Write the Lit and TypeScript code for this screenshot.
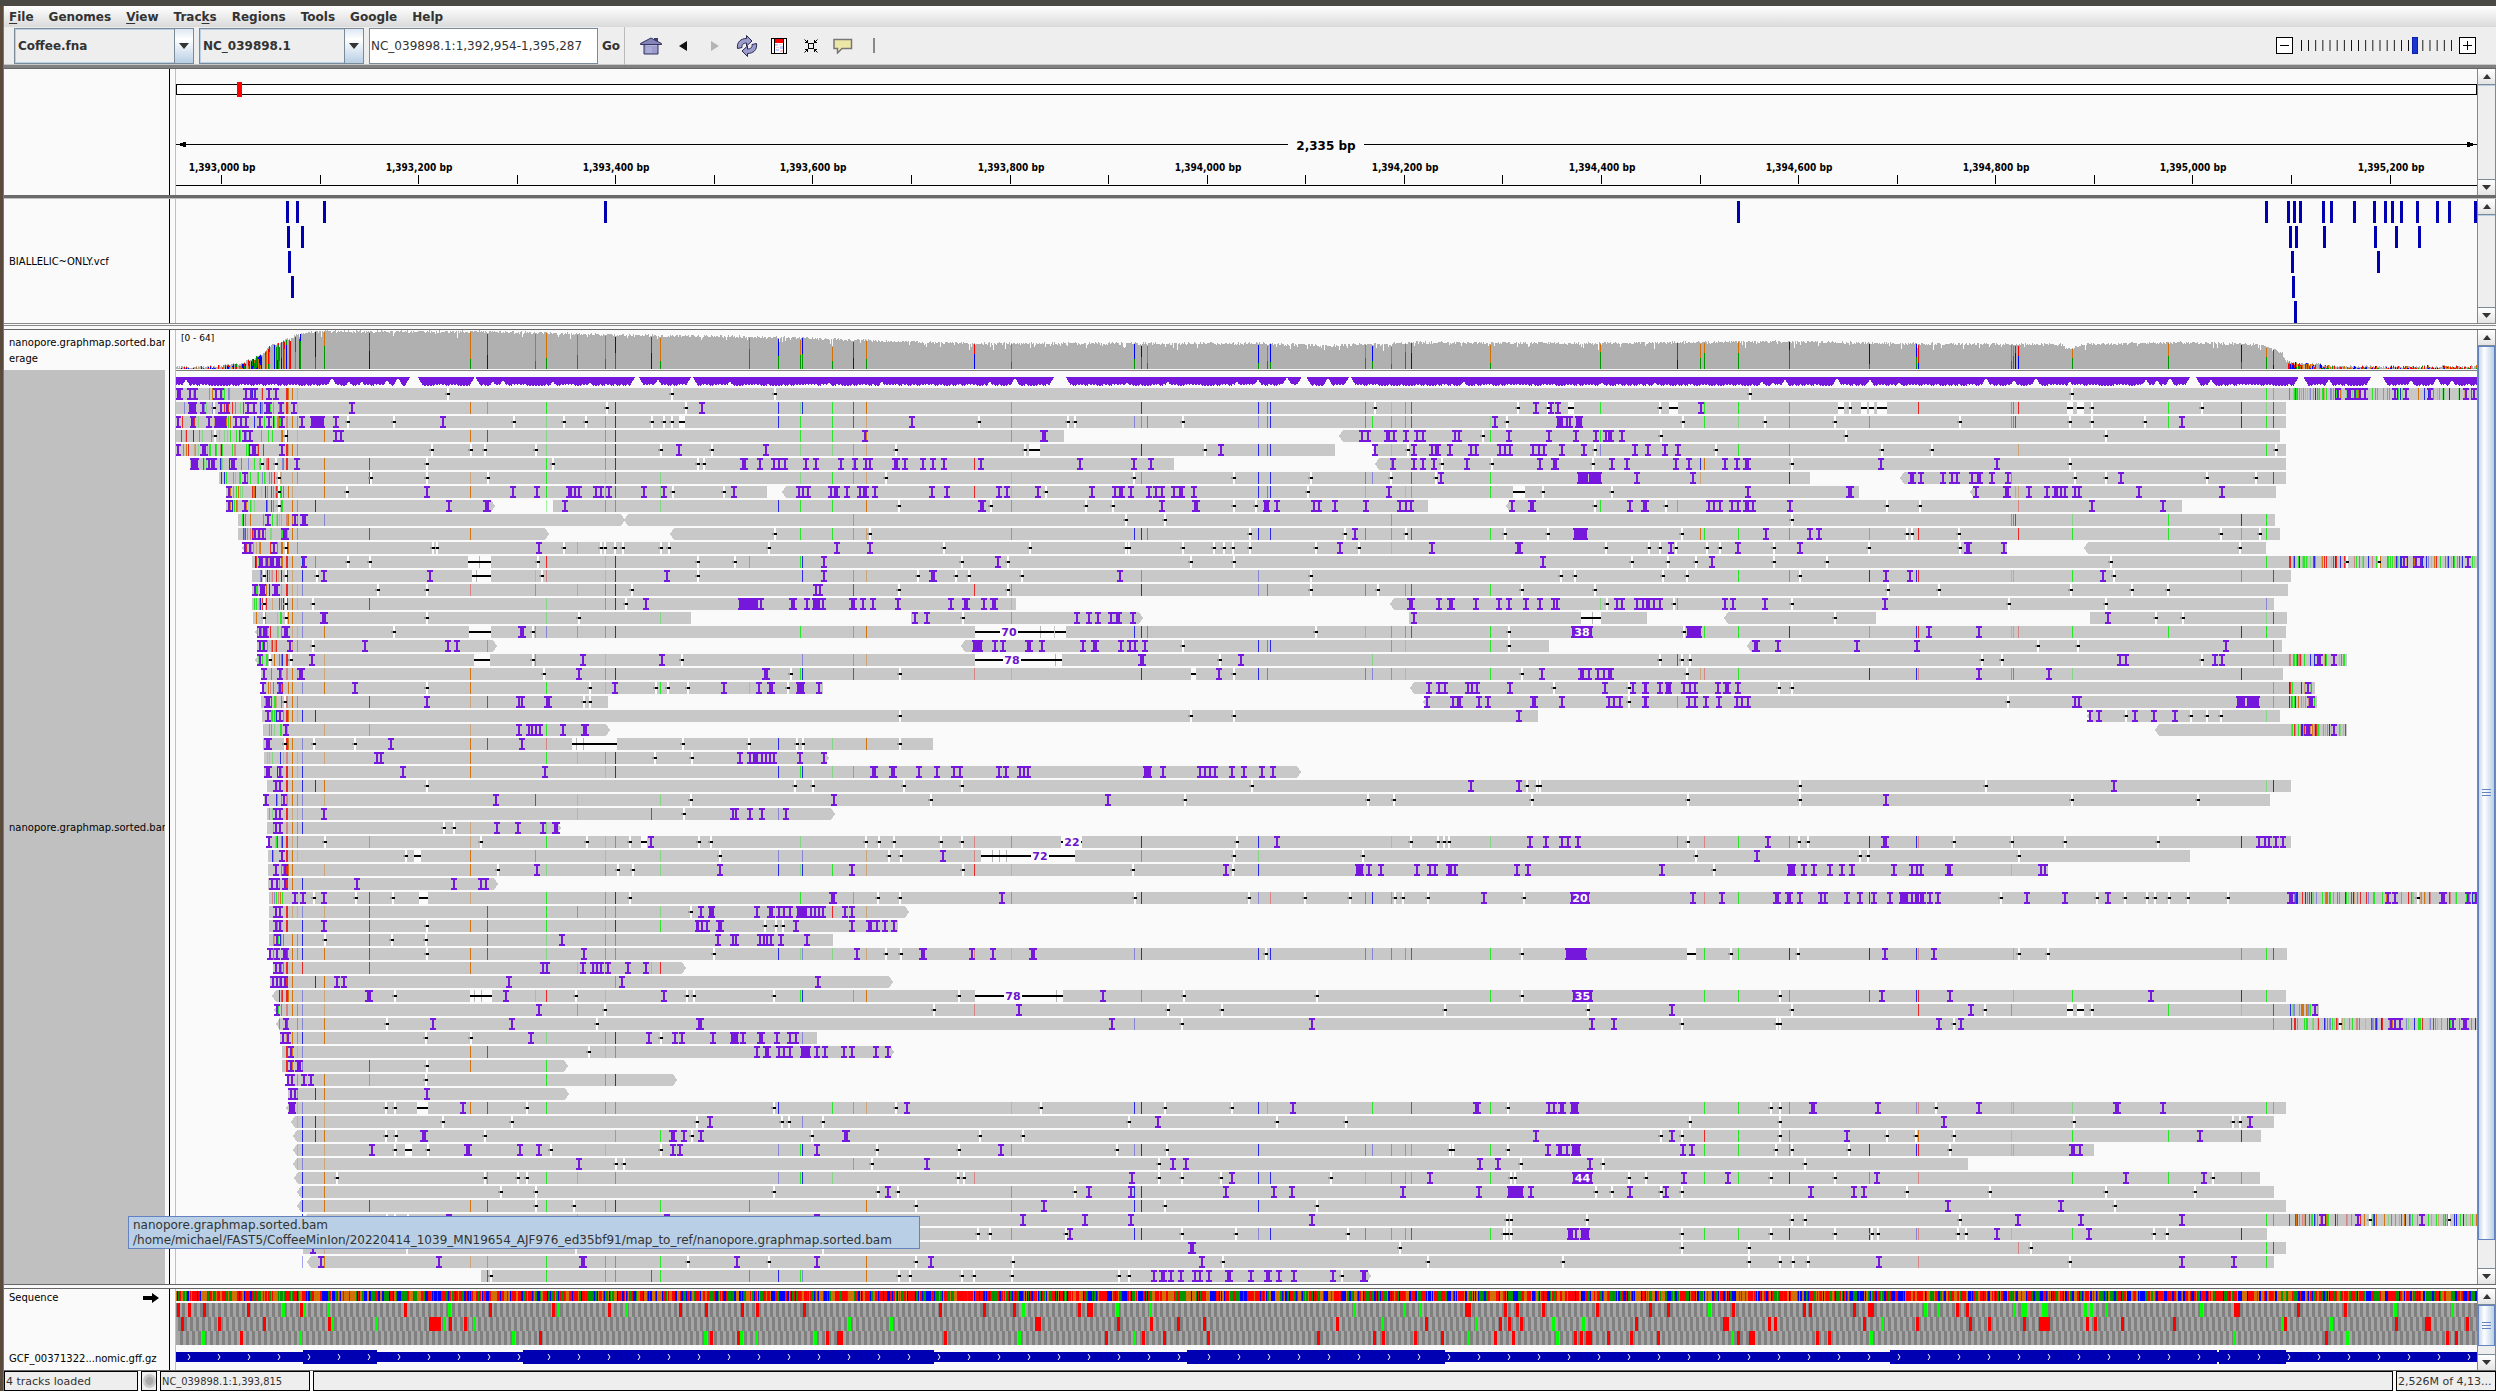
import { LitElement, html, svg, css } from "lit";
import { customElement, property } from "lit/decorators.js";

/* ---------- geometry of the data area ---------- */
const LEFT = 176;
const RIGHT = 2477;
const READ_TOP = 388;
const PITCH = 14;
const READ_H = 12;

const BASE: Record<string, string> = { "1": "#22e622", "2": "#2222e6", "3": "#d17105", "4": "#ec2020", "5": "#555555" };

/* Deterministic noise, so that the view is the same on every paint. */
const noise = (a: number, b = 0) => {
  let n = (a * 374761393 + b * 668265263) | 0;
  n = Math.imul(n ^ (n >>> 13), 1274126177);
  return ((n ^ (n >>> 16)) >>> 0) / 4294967296;
};

const box = (x: number, y: number, w: number, h: number) => `M${x} ${y}h${w}v${h}h${-w}z`;

/* Aligned reads per row; "<" and ">" mark the strand arrow. */
const SPANS = `176-2477|176-2286|176-2286|176-1064 <1339-2280|176-1335 <1373-2286|190-1174 <1375-2286|219-1810 <1900-2286|226-767 <782-1859 <1970-2276|226-495> 553-1428 <1506-2182|238-625> <624-2275|238-549> <670-2280|<242-2007 <2084-2266|252-2477|252-2291|252-2288|252-1016 <1390-2274|253-691 911-1143> 1409-1647 <1724-1876 2090-2287|<255-2286|257-497> <961-1549 <1747-2282|<255-2347|261-2283|262-823 <1410-2315|261-608 <1423-2317|262-1538 <2087-2280|263-610> <2155-2347|263-933|264-829>|264-1301>|267-2291|264-2270|267-835>|267-561>|268-2291|268-2190|268-2048|268-498>|269-2477|269-909>|269-898|269-833|269-2287|273-686>|270-893>|<272-2286|<274-2319|<276-2477|280-817|282-894>|282-568>|287-677>|288-569>|<286-2286|<291-2274|<293-2261|<293-2094|<293-1968|<294-2260|<297-2274|<297-2286|<303-2477|<303-2267|303-2286|<307-2274|481-1371>`.split("|");

/* Shared variant columns, addressed by letter. */
const COLS = "abcdefghijklmnopqrstuvwxyzABCDEFGHIJKLMNOPQRSTUVWXYZ";
const COL_X = [302, 315, 324, 369, 470, 487, 535, 546, 577, 605, 615, 651, 660, 749, 778, 800, 802, 832, 853, 866, 974, 1011, 1134, 1141, 1147, 1258, 1267, 1270, 1365, 1372, 1391, 1405, 1411, 1490, 1600, 1677, 1700, 1704, 1738, 1789, 1869, 1916, 1918, 2011, 2013, 2015, 2018, 2072, 2168, 2241, 2266, 2273];
const COL_BASE = "2234341131241321214341223232321141143112224134411214";

const VARIANTS = `Y Z4'|e f5' h k o p' q p' r s t v x z A B C E' F G I L M N' Q R S U W X Y' Z|h' j k o p r s t' v w' x' y z' A B C D1 E F G H' L M' N' O' R S T W X Y Z5|c e f5 h' j k p r t v H1 I|h' j k p' r' s' t' x z A B E' I2' M N' U3' Y|c d h j k s' u E K2 L3|c d e' h j' k m' p' r s' t' v' x' z B C3 D' G H K' N R Z5|c e h j k4 m' u v' z A B C' F' G' H T3' U3'|b h' j k' m' o p r t v G I J4' U4'|c2' s4' E R S T V' W X Y|d e p r s' t' v w x y z B C E1 G H K L M N' O4' Q V W X4' Y U|i' E'|a b' d4' h4 j' k n4' p q Y|a g' h4' j' k q s' t' x' z' M N' O P Q R' S' V X' Z5|a' e4' g i' j k s u v x z' A C F G H|d h' j k v' J' Y2' I'|a' h' m' v Y1' Z5|a' c g h2' i4' j k p s' t w x y C' E F G H L M N O4' P Q R' S' U4' V W X Y|f5' z A B E1 F' H Z5|c' g j' q' s' t' D1' J4 Z5'|a c' e j k p q s u' v' x z A C D' E F' H K' L4' M O P Q' R S V' X|a' c e h j' k m n1' Z5'|d e' f J1 Z5'|a b Y'|c' d' e' h|a' e f h4' o r' t|a' c' e h i1' j k|a e j' k o p q r' s'|a b c Y' Z2|a' c' g4 i1' m'|a' i1' l4 n o'|a e' h'|c' d' e' h j' k' p' u' v x z E' G' H' J1 L4' M N' O P Q' S' X|e g1 j' m' o' q' t' u' x' z1'|c' e h' j m' o p' q r t' u v' z R'|a|a' d e' h j k p s' v x z' B4' C D E4' L4' M O P|a' c' d f h i1 j k' m' r4 t'|a c' d e f h j' k m|a c' d f h' j k'|a c d e f h' j k' o p' q' r' t' u' v' w' x z B C D2' E3 F G H L M N O P Q' S' X' Y Z|a4 d e i1' j' m4 l1'|b c k1|a' c' g' h4 j' p q s' t H x' L M N' O4 P Q S' V X Y|a' c' i4' u' Q R W X1' Z|a' c w' Z2'|a c h' j k q'|a' e f j' k'|a' d e h|c d' h j k|b c|a' c' e f h j k' o r s' t' v' x w z A' D1 G H L M N' P' Q' R' S' V' Y Z'|a b c' q2'|a b c k4' m L4 M N' Q3 R' V W X|a c' j' o' p q v w' x z C D' E F G' H L M N' O P Q S' R'|a' c' s4'|a c f' h i' k' o' p q r' u' z B C3' E F G' H L M N O' Q' V W X'|a c v w x2|a c d5 e f h j k v w x z m n t|a i' Y Z2'|h k v w x z' B C E F G H L M N O P' Q' R' V X|c' U' Y Z|a' c e' f' h j k' m t Q4' Y|f4 h j k' n l4 m o p q' t`.split("|");

/*
 * Insertions and deletions, kept in tiles. A tile starts at x0 and has its
 * own unit; each line reads "row: insertions; deletions". "*" is a wide
 * insertion, "a-b" a run, and "=n" prints its length.
 */
interface Tile { x0: number; unit: number; rows: string }
const TILES: Tile[] = [
  { x0: 0, unit: 800 / 1568, rows: `0:350* 372 383 423 433 482 492 500 527 541;879 1318 1519
1:370-385 397 434 445 487 497 525* 551 576 690 1376;419 1189 1345
2:348 379 410 422-443 462 472 482 510 527 553 592 609-635 659 868;683 773 1007 1105 1149 1278 1301 1318 1330-1342
3:480 490 659 669;421 560
4:348 400* 497* 553 1331 1501;846 924 950 1051 1295 1395
5:375-389 409 418* 457* 582 1458* 1489 1517 1527 1538;513 540 837 1083 1369 1379
6:481;546 727 837 957
7:449 837 1006 1052 1118* 1127 1135 1168 1177 1193 1262 1301 1439 1567;546 681 1319 1419
8:449 481 880 954* 1107;546
9:525 578 596*;
10:500 508 516 558*;1519
11:480 490 537 1056;560 848 856 1105 1177 1185 1206 1222 1295 1312 1508
12:508-515 523 533* 545* 596;682 725 918-962 1054 1369 1440
13:635 843 1307;518 560 621 925-962 1063 1369
14:500 510-520 541*;741 837 1238
15:1266 1448-1486 1491 1555*;518 560 614 1226
16:636*;518 560 837 1135
17:510 520* 560* 1023*;773 920-962 1044
18:509 517 568 715 878 896;614
19:509 611 1143 1297;530 571 930-960 1044 1337
20:517 549 589* 1135 1501*;1067 1551` },
  { x0: 800, unit: 850 / 1568, rows: `1:1357 1385 1398;1061 1325 1380 1416-1427
2:206 1282 1396-1408 1414 1421 1431-1442;331 495 507 706 1305
3:119 450* 1037 1047 1085* 1096 1118 1139 1149 1208 1216 1307 1382 1431 1469 1487 1495* 1516;1260
4:776 1061 1132 1166 1175* 1199 1238 1247 1291 1300 1309 1353 1363 1373 1405 1446 1541 1564;177 415 423-442 747 1121 1466
5:11 30 76 102 121 130 178* 194 227 245 265 333 516 616 647 1093 1132 1149 1170 1231 1366 1392* 1498 1526;1185 1276 1463
6:1182 1436-1453 1456-1478 1544;158 616 800 942 1091 1173
7:5 15 57 67* 87 110 120* 138 243 271 367 381 439 538 582 592* 610 644 657 667 690 702* 727 1087;454 937 1315-1337 1370 1498
8:336* 668 731* 856-866 880 948 958 986 1045 1106 1117 1128 1313 1350* 1531 1557;183 352 527 577 800 841 1467
9:;602 673
10:1023 1427-1451;129 831 1005 1118 1301 1380
11:68 130 997 1165 1327*;265 424 602 607 706 764 782 799 831 951 1031 1487 1566
12:44 365 1370;299 384 722 800 1535
13:44 246* 590;218 287 311 410 942 1403 1429
14:29 37;183 384 942 1067 1332 1467
15:12 24-36 42 97* 116 134 180 278 306* 340 357* 1128* 1179 1201* 1247 1289 1307 1340 1366 1390 1397 1507 1516 1544 1555 1563;1488
16:212 234 511 533 549 574 587* 614 1132;300 1440-1478
17:1425-1461=38;322-468=70 471-491 951 1307
18:320-336 359 374 422* 446 522 544* 592 609 618 636;706 1308
19:631* 813;322-484=78 775
20:773 1368 1442* 1455 1472 1483 1495*;184 722-730 800 1332
21:1160 1179 1189 1232 1240 1248 1310 1485 1537 1558;1391 1530
22:1156 1205 1216* 1252 1269 1354* 1406 1493 1502 1512 1558;1530
23:1326;722 800
27:635-648 670 737 747 757 766 796 819 852 872;` },
  { x0: 1646, unit: 850 / 1568, rows: `0:1276 1297* 1308 1318 1327 1382 1402 1446 1513 1528;191 785
1:101;26 43-59 355-366 377 397-408 412-420 426-444 777-788 795-808 823 1026
2:988;69 219 348 580 782 822 920
3:;27 369 848
4:4 35 59;130 435 528 1163
5:55 79 145 168 187* 433 647;270 782
6:86 491* 507 547 564 574 601 614* 638 668 876;791 848 1035 1125
7:188 376* 608 666* 706 740 757* 765 773 792 799 909 1062;
8:0 116 126 137 158 169 187* 198 265 822 953;37 444 505
9:;270
10:221 302 320;66 481 490 578 1060 1132
11:46 169 285 594* 660;5 26 56 113 136 236 412 580 1096
12:121 1399 1420 1429 1517;41 92 236 334 857 1293 1352
13:442 487 843;31 75 284 863
14:;446 540 784 896 963
15:5 15 25 145 160 219 440;52 270 669 848
16:852;348 940 990
17:75-101 522 614;70
18:202* 243 389 500 1070;724 797
19:874 885 1049 1062 1242* 1270;26 67 81 620 656 1026
20:614 743;75
21:0 26 36-46 71 81 91 132 150* 169 1222;246 270
22:0 79 90 110 135 167 177 188 791 798 1090-1105 1109-1131 1226*;667
23:819 836 902 938 976;885 1005 1035 1060
24:1222* 1270;` },
  { x0: 250, unit: 780 / 1568, rows: `21:26 60 211 734 953 1023 1048* 1100-1113 1144;356 683 816 840 880 1081
22:36* 356 540 547 600*;71 671 683
23:37 60;1306
24:72 540 560 567 575 582 629 673*;
25:36* 283 547;71 129 211 647-738 870 1003 1100 1111 1306
26:255 263 985 1005 1012-1022 1030 1037 1045 1053 1106 1154;814 888
27:36* 60 308 593 1255* 1293* 1345 1381 1415 1428 1506 1520 1547 1555 1564;
28:53 60;355 1095 1132 1315 1432
29:32 69 494 1174;887 1369
30:53 60 149 970 977 1005 1029 1077;872
31:53 60 497 539 589 616*;390 410
32:39 806;150 465 677 764 787-799 902 926 1238 1265 1294 1390 1432
33:64 1393;314 330-344 944 1285 1308
34:53 71 577 945 1210;499 740 770 1433
35:44 54 70 215 410 464 474;
36:91 107 149 1171* 1512;129 214 287 340-358 763 1263 1306
37:53 60 907 923-933 1019 1048* 1064 1074 1085 1100-1120 1127 1136 1143 1152 1196 1210;887
38:53 60 149 897-902 909 919 945* 1098 1210 1247* 1260 1276 1294;355 1036 1057 1072
39:54 627 941 970 977 1025 1033 1040 1048 1067 1120;150 285 353
40:40 54 70* 671 1220 1353* 1451 1494;355 932 1278 1308
41:53 60 589 597 669 690 698 706 719 760 796;
42:46 55 63 71 175 189 521 748 1142;
43:240* 515 832;291 442-486 656 878 893 1054 1425
44:54 581 1546;713 1375
45:73 368 527 904*;275 698
46:67 76 565 802 854 869 931 967-980 992 1027* 1060 1086 1097;353 445 827
47:83 1019 1040* 1063 1074 1085 1108-1126 1140 1156 1194 1210 1258 1283;681
48:83 99*;356
49:77 84 109 123;353
50:82 91 356;
51:78-90 428 1321;274 291 336-358 557 1054 1298
52:925;388 527 898 1070 1084 1152
53:349* 850* 872 907 1199*;274 293 472 888 1130 1468 1554
54:245 438* 543 581 850 864 1140 1510;291 312-326 358 606 826 1261 1425
55:661 1361;736 751 1251
56:;174 472 539 557 1424 1436` },
  { x0: 960, unit: 800 / 1568, rows: `28:1002 1096;573 1112 1130 1137
29:290;441 799 851 1122 1427
32:621 1117 1148 1180 1192 1212;198-240=22 543 884 936 948 959 1427
33:1563;41-225=72 537 790 1443
34:521 777-790 802 825 896 922 931 960* 971 1091 1113 1376;339 536 1477
36:1027 1197-1233=20 1437 1493;343 566 676 764 852 868 917 1106
40:144* 1188-1226;599 1102 1425-1443 1512
43:280 1202-1239=35;29-202=78 440 699 1102
44:1395;408 513 950 1230
45:298 690 1239 1282;436 1416
51:653 1014* 1155 1165 1180* 1198-1212;158 402 534 1074
52:388;331 622 757 1431
53:1129 1395;1373 1416
54:1152 1176* 1190 1200-1216 1417 1435;307 405 961 967 1074
55:417 443 1019 1054 1235;391 1100 1260
56:337 533 921 1202-1239=44 1419 1505;391 436 512 727 1079 1087 1311 1345
57:253 335 521 615 651 868 1017 1075-1103 1119 1313 1384;225 1247 1278 1373 1416
58:165;402 699
59:123 245 335 690;1073 1080 1229
60:215 1192-1202 1208 1217-1232;35 59 207 436 540 760 1067 1073 1080 1416
61:455*;862 1416 1547
62:474;103 516 917 1182 1547
63:380 398* 413 433 461 471 488 528* 570 604* 625 655 731 791*;3 28 102 312 332 748` },
  { x0: 1700, unit: 796 / 1568, rows: `28:815;197 563
29:366;197 733 980
32:134 365* 1102 1112 1121 1135 1149;195 213 501 615 719 902
33:;316 331 628
34:174-188 205 225 256 280 299 382 418 427 435 490* 671 680;
36:151* 176* 197 238 246 290 315 343 374 394-410 418 427* 437* 453 469 644 719 804 1165* 1356 1369 1463* 1513 1528;593 782 837 880 897 924 961 1041 1415
40:364 461;194 628 685
43:358 492 888;157
44:534 1212;182 562 723-735 743-756 772
45:471 514 1361 1370 1379 1484 1506*;152 157 500 1261
51:222* 351 549 821* 912;140 157 464
52:481 1083;157 737 1050 1063
53:290 985;158 368 426 500
54:735* 748;150 181 293 492
55:;207
56:349 839 993;139 266 1010
57:219 303 323;407 571 799 976
58:488 711;817
59:626 750 949 1225 1296 1422;182 207 513 1320 1476
60:585 766;139 266 338 351 508 523 895 920
61:;652
62:353 949 1052;157 183 212 729` },
  { x0: 0, unit: 960 / 1568, rows: `57:1450;818 875 1264 1434 1467
58:;876 937 1496
59:733 1090 1334;632 645 666
61:511;665 941 1344
62:524 717 952* 1203 1334 1520;1123 1256 1496
63:;802 1469 1487` },
];

const VCF = [
  [287, 297, 324, 605, 1738, 2266, 2288, 2294, 2300, 2323, 2331, 2354, 2374, 2385, 2392, 2401, 2417, 2437, 2449, 2475],
  [288, 302, 2290, 2296, 2324, 2375, 2396, 2419],
  [289, 2292, 2378],
  [292, 2293],
  [2295],
];

/* Coverage profile: x, top edge. */
const PROFILE: [number, number][] = [[176, 367], [218, 366], [240, 362], [254, 358], [264, 352], [269, 346], [274, 344], [284, 340], [296, 335], [306, 332], [320, 331], [480, 331], [560, 333], [640, 335], [800, 337], [860, 340], [970, 343], [1260, 343], [1330, 345], [1420, 342], [1600, 343], [1770, 341], [1900, 343], [2060, 344], [2070, 349], [2082, 344], [2180, 342], [2262, 344], [2272, 348], [2282, 353], [2286, 361], [2300, 363], [2320, 364], [2340, 366], [2477, 366]];
const coverTop = (x: number) => {
  let i = 1;
  while (i < PROFILE.length - 1 && PROFILE[i][0] < x) i++;
  const [x1, y1] = PROFILE[i - 1], [x2, y2] = PROFILE[i];
  const t = y1 + ((x - x1) / (x2 - x1)) * (y2 - y1);
  const dip = noise(x, 5) > 0.93 && x < 2280 ? noise(x, 6) * 6 : 0;
  return Math.min(368, Math.round(t + noise(x, 1) * 2.6 - 0.8 + dip));
};

/* Notches in the insertion band: position, height, flat top. */
const NOTCHES: [number, number, number][] = [[186, 7, 0], [332, 8, 0], [349, 5, 0], [362, 5, 0], [387, 6, 0], [398, 8, 0], [414, 9, 8], [475, 9, 1], [493, 5, 0], [503, 6, 0], [553, 5, 0], [590, 4, 0], [637, 9, 4], [658, 7, 0], [692, 9, 2], [730, 5, 0], [829, 4, 0], [882, 5, 0], [990, 5, 0], [1015, 8, 0], [1060, 9, 12], [1127, 4, 0], [1168, 5, 0], [1237, 5, 0], [1258, 7, 0], [1287, 8, 1], [1304, 9, 5], [1328, 8, 0], [1350, 9, 2], [1464, 5, 0], [1602, 4, 0], [1655, 4, 0], [1762, 5, 0], [1773, 4, 0], [1785, 7, 0], [1837, 8, 0], [1870, 7, 0], [1899, 4, 0], [1986, 8, 0], [2014, 6, 0], [2036, 8, 0], [2070, 5, 0], [2146, 7, 0], [2157, 6, 0], [2170, 8, 0], [2193, 9, 6], [2211, 7, 0], [2301, 9, 5], [2329, 7, 0], [2377, 9, 12], [2411, 6, 0], [2437, 8, 0], [2452, 6, 0]];

/* Where a deletion's length is printed along its line. */
const LABEL_AT: Record<string, number> = { "70": 0.43, "78": 0.43, "72": 0.63, "22": 0.5 };

function readsLayer() {
  const ink: Record<string, string> = {};
  const faint: Record<string, string> = {};
  let body = "", gaps = "", dash = "", tail = "", ins = "", fine = "";
  const labels: { x: number; y: number; text: string; light: boolean }[] = [];

  SPANS.forEach((line, r) => {
    const y = READ_TOP + r * PITCH;
    line.split(" ").forEach((s) => {
      const m = /^(<?)(\d+)-(\d+)(>?)$/.exec(s)!;
      const a = +m[2], b = +m[3];
      const l = m[1] ? a + 4 : a, e = m[4] ? b - 4 : b;
      body += `M${l} ${y}H${e}${m[4] ? `L${b} ${y + 6}L${e} ${y + 12}` : `V${y + 12}`}H${l}${m[1] ? `L${a} ${y + 6}` : ""}z`;
      /* soft-clipped, mismatch-rich ends */
      const dense = (from: number, to: number, rate: number) => {
        for (let x = from; x < to; x++) {
          if (noise(x, r + 40) > rate) continue;
          const k = "12341"[Math.floor(noise(x + 9, r * 3 + 7) * 5)];
          const set = noise(x, r + 91) > 0.35 ? ink : faint;
          set[k] = (set[k] || "") + box(x, y, 1, READ_H);
        }
      };
      if (b > 2300) {
        dense(2289, Math.min(b, 2330), 0.5);
        dense(2330, b, 0.32);
      }
      if (a < 300) {
        dense(a + 2, 284, r < 6 ? 0.2 : r < 20 ? 0.3 : 0.22);
        const fixed: [number, number, string, number][] = [[281, 1, "3", 0.5], [286, 2, "4", 0.75], [288, 1, "3", 0.3], [292, 1, "3", 0.7], [297, 1, "1", 0.7]];
        fixed.forEach(([x, w, k, p]) => {
          if (x > a + 3 && noise(x, r) < p) {
            const set = noise(x, r + 3) > 0.3 ? ink : faint;
            set[k] = (set[k] || "") + box(x, y, w, READ_H);
          }
        });
      }
    });
    VARIANTS[r].split(" ").forEach((t) => {
      const m = /^([a-zA-Z])([1-5]?)('?)$/.exec(t);
      if (!m) return;
      const i = COLS.indexOf(m[1]);
      const k = m[2] || COL_BASE[i];
      const set = m[3] ? faint : ink;
      set[k] = (set[k] || "") + box(COL_X[i], y, 1, READ_H);
    });
  });

  TILES.forEach((tile) => {
    const at = (v: string) => Math.round(tile.x0 + +v * tile.unit);
    tile.rows.split("\n").forEach((line) => {
      const [row, rest] = line.split(":");
      const y = READ_TOP + +row * PITCH;
      const [is, ds] = rest.split(";");
      is.split(" ").filter(Boolean).forEach((t) => {
        const [range, label] = t.split("=");
        if (range.includes("-")) {
          const [a, b] = range.split("-").map(at);
          ins += box(a, y, b - a, READ_H) + box(a - 1, y, b - a + 2, 2) + box(a - 1, y + 10, b - a + 2, 2);
          if (label) labels.push({ x: (a + b) / 2, y: y + 11, text: label, light: true });
        } else {
          const wide = range.endsWith("*");
          const x = at(range.replace("*", ""));
          const h = wide ? 4 : 3, s = wide ? 4 : 2;
          ins += box(x - h, y, h * 2, 2) + box(x - h, y + 10, h * 2, 2) + box(x - s / 2, y + 2, s, 8);
        }
      });
      ds.split(" ").filter(Boolean).forEach((t) => {
        const [range, label] = t.split("=");
        if (range.includes("-")) {
          const [a, b] = range.split("-").map(at);
          gaps += box(a, y, b - a, READ_H);
          dash += box(a, y + 5, b - a, 2);
          if (b - a > 40 || (b - a > 18 && !label)) {
            const from = label === "72" ? a : label ? b - 18 : a;
            const to = label === "72" ? a + 26 : b - 4;
            for (let x = from + 4; x < to; x += 7) if (noise(x, +row) > 0.5) fine += box(x, y, 1, READ_H);
          }
          if (label) labels.push({ x: Math.round(a + (b - a) * LABEL_AT[label]), y: y + 11, text: label, light: false });
        } else {
          const x = at(range);
          gaps += box(x - 1, y, 2, READ_H);
          dash += box(x - 1, y + 5, 3, 2);
          tail += box(x - 3, y + 5, 2, 2);
        }
      });
    });
  });

  return svg`
    <path fill="#c8c8c8" d=${body}></path>
    ${Object.keys(faint).map((k) => svg`<path fill=${BASE[k]} opacity="0.4" d=${faint[k]}></path>`)}
    ${Object.keys(ink).map((k) => svg`<path fill=${BASE[k]} opacity="0.95" d=${ink[k]}></path>`)}
    <path fill="#fafafa" d=${gaps}></path>
    <path fill="#999999" d=${tail}></path>
    <path fill="#b4b4b4" d=${fine}></path>
    <path fill="#000000" d=${dash}></path>
    <path fill="#7518dc" d=${ins}></path>
    ${labels.map((l) => svg`
      ${l.light ? "" : svg`<rect x=${l.x - 9} y=${l.y - 11} width="18" height="12" fill="#fafafa"></rect>`}
      <text class="count" x=${l.x} y=${l.y - 1} fill=${l.light ? "#ffffff" : "#6a14cc"}>${l.text}</text>`)}
  `;
}

function coverageLayer() {
  const base = 369;
  let grey = "";
  const ink: Record<string, string> = {};
  const put = (k: string, x: number, y: number, h: number, w = 1) => (ink[k] = (ink[k] || "") + box(x, y, w, h));
  for (let x = LEFT; x < RIGHT; x++) {
    const t = coverTop(x);
    grey += box(x, t, 1, base - t);
    const inLeft = x < 304, inRight = x > 2287;
    if ((inLeft && noise(x, 77) < (x > 250 && x < 262 ? 0.9 : 0.5)) || (inRight && noise(x, 77) < 0.75)) {
      const h = base - t - Math.round(noise(x, 12) * 2);
      if (h < 1) continue;
      const split = Math.round(h * noise(x, 13));
      put("41342"[Math.floor(noise(x, 14) * 5)], x, base - h, split);
      put("1234"[Math.floor(noise(x, 15) * 4)], x, base - h + split, h - split);
    }
  }
  COL_X.forEach((x, i) => {
    if (x < 305 || x > 2274) return;
    const t = coverTop(x) + 1;
    const h = base - t;
    const cut = Math.round(h * (0.3 + noise(x, 21) * 0.5));
    const top = COL_BASE[i] === "2" ? "2" : COL_BASE[i] === "4" ? "4" : "3";
    put(top, x, t, cut);
    put(top === "4" ? "2" : "1", x, t + cut, h - cut);
  });
  const deep: Record<string, string> = { "1": "#009600", "2": "#0000ff", "3": "#d17105", "4": "#ff0000" };
  const band = `M${LEFT} 377H${RIGHT}V386H${LEFT}z`;
  let cuts = "";
  NOTCHES.forEach(([x, h, w]) => {
    const half = Math.max(3, Math.round(h * 0.6));
    cuts += `M${x - w / 2} ${386 - h}H${x + w / 2}L${x + w / 2 + half} 386H${x - w / 2 - half}z`;
  });
  for (let x = LEFT; x < RIGHT; x += 3) {
    const h = 1 + Math.floor(noise(x, 33) * 2.4);
    cuts += `M${x} 386L${x + 1} ${386 - h}L${x + 3} 386z`;
  }
  return svg`
    <path fill="#b0b0b0" d=${grey}></path>
    ${Object.keys(ink).map((k) => svg`<path fill=${deep[k]} d=${ink[k]}></path>`)}
    <rect x=${LEFT} y="370" width=${RIGHT - LEFT} height="1" fill="#808080"></rect>
    <path fill="#7518dc" d=${band}></path>
    <path fill="#fafafa" d=${cuts}></path>
    <text class="small" x="181" y="341">[0 - 64]</text>
  `;
}

/* Codon marks per frame: stops, then starts; "w" is a double codon. */
const CODONS: { x0: number; unit: number; frames: [string, string][] }[] = [
  { x0: 0, unit: 960 / 1568, frames: [
    ["290 309 333 405 492 662 801 904 995 1111 1153 1212 1237 1313 1536", "463 497 536 733 912 1023"],
    ["297 358 431 538 706w 716w 735 760", "543 614 726 775 1387 1456"],
    ["394 882 1162 1206 1351 1372w 1544", "332 490 838 1152 1211 1235 1331"]] },
  { x0: 950, unit: 960 / 1568, frames: [
    ["56 105 211 228w 846w 907 926 969 1057 1144 1173 1279 1395 1405 1477 1504w", "119 273 327 660 742 767 1240"],
    ["144w 275 329 373 415 632 778 899 913 933 1121 1268w 1338 1348 1493", "706 859 985 1034 1522"],
    ["254 316 350 422 601 693 708 760 804 890 920 1021 1031 1044w 1074 1113 1157 1287 1310w 1416 1436", "113 301 846 992 1278 1505"]] },
  { x0: 1900, unit: 596 / 1568, frames: [
    ["151 175 886w 1047 1172", "67 99 301 327w 381w 487 503 541 791 1303 1451"],
    ["46 185 233 326 374w 386w 491 512 583 722 1012 1305 1389w 1493", "1004 1135"],
    ["1122 1440 1464", "879 1177"]] },
];

function sequenceLayer() {
  const ink = ["", "", "", ""];
  let prev = 0;
  for (let x = LEFT; x < RIGHT; x++) {
    if (noise(x, 51) > 0.28) prev = Math.floor(noise(x, 52) * 4.6) % 4;
    ink[prev] += box(x, 1291, 1, 10);
  }
  let dark = "", red = "", green = "";
  for (let f = 0; f < 3; f++)
    for (let x = LEFT + f * 2; x < RIGHT; x += 6) dark += box(x, 1303 + f * 14, 3, 14);
  CODONS.forEach((t) => t.frames.forEach(([stops, starts], f) => {
    const draw = (s: string) => s.split(" ").map((v) => {
      const w = v.endsWith("w") ? 6 : 3;
      return box(Math.round(t.x0 + parseInt(v) * t.unit) - (w >> 1), 1303 + f * 14, w, 14);
    }).join("");
    red += draw(stops);
    green += draw(starts);
  }));
  const exons = [[303, 377], [523, 934], [1187, 1445], [1890, 2217], [2219, 2286]];
  let arrows = "";
  for (let x = 188; x < RIGHT; x += 30) arrows += `M${x} 1354l2 3l-2 3`;
  return svg`
    <path fill="#ff0000" d=${ink[0]}></path><path fill="#009600" d=${ink[1]}></path>
    <path fill="#0000ff" d=${ink[2]}></path><path fill="#d17105" d=${ink[3]}></path>
    <rect x=${LEFT} y="1303" width=${RIGHT - LEFT} height="42" fill="#a5a5a5"></rect>
    <path fill="#808080" d=${dark}></path>
    <path fill="#ff0000" d=${red}></path><path fill="#00ff00" d=${green}></path>
    <rect x=${LEFT} y="1352" width=${RIGHT - LEFT} height="10" fill="#0000b2"></rect>
    ${exons.map(([a, b]) => svg`<rect x=${a} y="1350" width=${b - a} height="14" fill="#0000b2"></rect>`)}
    <path d=${arrows} fill="none" stroke="#ffffff" stroke-width="1" shape-rendering="auto"></path>
  `;
}

function rulerLayer() {
  const ticks = Array.from({ length: 23 }, (_, i) => Math.round(221 + i * 98.57));
  return svg`
    <rect x="176.5" y="84.5" width="2300" height="10" fill="#ffffff" stroke="#000000"></rect>
    <rect x="237" y="82" width="5" height="15" fill="#ff0000"></rect>
    <rect x="176" y="144" width="2301" height="1" fill="#000000"></rect>
    <path d="M177 144.500l9 -3v6zM2476 144.500l-9 -3v6z" fill="#000000"></path>
    <rect x="1288" y="138" width="76" height="14" fill="#fafafa"></rect>
    <text class="span" x="1326" y="150">2,335 bp</text>
    ${ticks.map((x, i) => svg`
      <rect x=${x} y="175" width="1" height="9" fill="#000000"></rect>
      ${i % 2 ? "" : svg`<text class="tick" x=${x + 1} y="171">${(1393000 + i * 100).toLocaleString("en-US")} bp</text>`}`)}
    <rect x="176" y="185" width="2301" height="1" fill="#000000"></rect>
  `;
}

@customElement("track-view")
class TrackView extends LitElement {
  static styles = css`
    :host { display: block; min-width: 0; }
    .plot { display: block; width: 100%; background: #fafafa; }
    .count, .span, .tick { font-family: "DejaVu Sans", sans-serif; text-anchor: middle; }
    .count { font-size: 11px; font-weight: bold; }
    .span { font-size: 12px; font-weight: bold; }
    .tick { font-family: "DejaVu Sans Condensed", "DejaVu Sans", sans-serif; font-size: 10px; font-weight: bold; }
    .small { font-family: "DejaVu Sans", sans-serif; font-size: 9px; }
  `;
  @property() kind = "";
  @property({ type: Number }) top = 0;
  @property({ type: Number }) span = 0;

  private layer() {
    switch (this.kind) {
      case "ruler": return rulerLayer();
      case "variants": return VCF.map((row, i) => svg`<path fill="#0000b2" d=${row.map((x) => box(x - 1, 201 + i * 25, 3, 22)).join("")}></path>`);
      case "reads": return svg`${coverageLayer()}${readsLayer()}`;
      default: return sequenceLayer();
    }
  }
  render() {
    return html`<svg class="plot" height=${this.span} viewBox="${LEFT} ${this.top} ${RIGHT - LEFT} ${this.span}"
      preserveAspectRatio="none" shape-rendering="crispEdges" role="img" aria-label=${this.kind}>${this.layer()}</svg>`;
  }
}

@customElement("scroll-bar")
class ScrollBar extends LitElement {
  static styles = css`
    :host { display: flex; flex-direction: column; box-sizing: border-box; border-left: 1px solid #7a8a99; border-right: 1px solid #7a8a99; background: #eeeeee; }
    .step { flex: none; height: 16px; padding: 0; border: 0; border-bottom: 1px solid #7a8a99; background: linear-gradient(#ffffff, #e4e4e4); display: grid; place-items: center; }
    .step.down { border-bottom: 0; border-top: 1px solid #7a8a99; }
    .track { display: flex; flex-direction: column; flex: 1; box-shadow: inset 0 1px #b8cfe5; }
    .thumb { display: grid; place-content: center; gap: 1px; border: 1px solid #6382bf; box-sizing: border-box; background: linear-gradient(90deg, #c8d8ea, #ffffff 35%, #b8cfe5); }
    .grip { width: 9px; height: 1px; margin-bottom: 1px; background: #6382bf; }
  `;
  @property({ type: Number }) thumb = 0;
  render() {
    return html`
      <button class="step" aria-label="Scroll up"><svg width="8" height="5"><path d="M4 0L8 5H0z" fill="#333"></path></svg></button>
      <div class="track">${this.thumb ? html`<div class="thumb" style="height:${this.thumb}%">
        <i class="grip"></i><i class="grip"></i><i class="grip"></i></div>` : ""}</div>
      <button class="step down" aria-label="Scroll down"><svg width="9" height="5"><path d="M0 0H9L4.500 5z" fill="#333"></path></svg></button>`;
  }
}

const MENU: [string, string, string][] = [["", "F", "ile"], ["Genomes", "", ""], ["", "V", "iew"], ["Trac", "k", "s"], ["Regions", "", ""], ["Tools", "", ""], ["Google", "", ""], ["Help", "", ""]];

@customElement("app-root")
class AppRoot extends LitElement {
  static styles = css`
    :host { display: block; position: relative; font-family: "DejaVu Sans", sans-serif; color: #333333; background: #eeeeee; }
    * { box-sizing: border-box; }
    .title { height: 6px; background: #4b4943; }
    .window { border-left: 3px solid #5a4a3c; }
    .inner { border-left: 1px solid #777777; }
    .menu { display: flex; gap: 15px; height: 21px; padding-left: 5px; background: linear-gradient(#ffffff, #dadada); }
    .menu button { padding: 0; border: 0; background: none; font: bold 12px "DejaVu Sans", sans-serif; color: #333333; }
    .key { text-decoration: underline; text-underline-offset: 2px; }
    .tools { display: flex; align-items: center; height: 38px; padding: 0 20px 0 10px; border-bottom: 1px solid #c8c8c8; background: #eeeeee; }
    .combo { display: grid; height: 36px; margin-right: 5px; border: 1px solid #7a8a99; box-shadow: inset 0 0 0 1px #b8cfe5; background: #eeeeee; }
    .combo > * { grid-area: 1 / 1; }
    .combo.genome { width: 180px; }
    .combo.chrom { width: 165px; }
    .combo select { appearance: none; padding: 0 22px 0 3px; border: 0; background: none; font: bold 12px "DejaVu Sans", sans-serif; color: #333333; }
    .drop { justify-self: end; width: 19px; display: grid; place-items: center; border-left: 1px solid #7a8a99; background: linear-gradient(#dde8f3, #ffffff 30%, #b8cfe5); pointer-events: none; }
    .locus { width: 229px; height: 36px; padding: 0 1px; border: 1px solid #7a8a99; background: #ffffff; font: 12px "DejaVu Sans", sans-serif; color: #333333; }
    .go { height: 38px; padding: 0 4px; border: 0; border-right: 1px solid #bbbbbb; background: none; font: bold 12px "DejaVu Sans", sans-serif; color: #333333; }
    .icons { display: flex; align-items: center; gap: 8px; margin-left: 14px; }
    .icons button { display: grid; place-items: center; width: 24px; height: 24px; padding: 0; border: 0; background: none; }
    .bar { width: 2px; height: 15px; margin-left: 18px; background: #888888; }
    .zoom { display: flex; align-items: center; gap: 5px; margin-left: auto; }
    .zoom button { display: grid; place-items: center; width: 17px; height: 17px; padding: 0; border: 1px solid #000000; background: #ffffff; }
    .zoom input { appearance: none; width: 156px; height: 17px; margin: 0; background: linear-gradient(90deg, #000000 1px, transparent 1px) 3px 3px / 7.143px 11px repeat-x; clip-path: inset(0); }
    .zoom input::-webkit-slider-thumb { appearance: none; width: 6px; height: 17px; background: #1a35d0; border: 1px solid #0a20b0; box-shadow: 0 0 0 1px #eeeeee; }
    .rule { height: 3px; background: #808080; }
    .panel { display: grid; grid-template-columns: 166px 5px minmax(0, 1fr) 19px; background: #fafafa; }
    .panel.header { border-top: 1px solid #666666; border-bottom: 3px solid #6a6a6a; }
    .panel.vcf { border-top: 1px solid #c0c0c0; border-bottom: 3px double #888888; }
    .panel.reads, .panel.features { border-top: 1px solid #666666; border-bottom: 1px solid #666666; }
    .split { height: 3px; background: #fafafa; }
    .names { display: flex; flex-direction: column; justify-content: center; border-right: 1px solid #000000; font-size: 10px; line-height: 16px; color: #000000; white-space: nowrap; min-width: 0; }
    .names.mid { padding-top: 2px; }
    .name { padding-left: 5px; overflow: hidden; }
    .names.feat { justify-content: space-between; padding: 1px 0 3px; }
    .view { grid-column: 3; border-left: 1px solid #c0c0c0; }
    .cover { height: 40px; padding-top: 5px; margin-right: 4px; }
    .selected { flex: 1; display: flex; align-items: center; margin-right: 4px; padding-top: 2px; background: #c0c0c0; }
    .strand { display: flex; align-items: center; justify-content: space-between; padding-right: 10px; }
    .status { display: flex; gap: 3px; height: 20px; background: #fafafa; font-size: 11px; }
    .cell { display: flex; align-items: center; border: 1px solid #000000; background: #eeeeee; white-space: nowrap; overflow: hidden; padding-left: 1px; }
    .loaded { width: 134px; }
    .lamp { width: 16px; justify-content: center; padding: 0; }
    .lamp i { width: 13px; height: 14px; border-radius: 50%; background: radial-gradient(#aaaaaa 35%, #c8c8c8 50%); }
    .place { width: 150px; font-family: "DejaVu Sans Condensed", "DejaVu Sans", sans-serif; }
    .note { flex: 1; }
    .memory { width: 100px; }
    .tip { position: absolute; left: 128px; top: 1216px; min-width: 792px; padding: 1px 4px 0; border: 1px solid #6382bf; background: #b8cfe5; font-size: 12px; line-height: 15px; color: #333333; white-space: nowrap; }
  `;

  render() {
    const arrow = html`<span class="drop"><svg width="10" height="6"><path d="M0 0H10L5 6z" fill="#333"></path></svg></span>`;
    return html`
      <div class="title"></div>
      <div class="window"><div class="inner">
        <nav class="menu" aria-label="Main menu">${MENU.map(([a, k, b]) => html`<button>${a}${k ? html`<span class="key">${k}</span>` : ""}${b}</button>`)}</nav>
        <div class="tools">
          <div class="combo genome"><select aria-label="Genome"><option>Coffee.fna</option></select>${arrow}</div>
          <div class="combo chrom"><select aria-label="Chromosome"><option>NC_039898.1</option></select>${arrow}</div>
          <input class="locus" aria-label="Locus" .value=${"NC_039898.1:1,392,954-1,395,287"} />
          <button class="go">Go</button>
          <div class="icons">
            <button aria-label="Whole genome"><svg width="22" height="18">
              <path d="M14 1h4v5h-4z" fill="#3c3c6e"></path>
              <path d="M4 7h14v10H4z" fill="#9c9ccc" stroke="#33335e"></path>
              <path d="M0.500 6.500L11 1l10.500 5.500v1H0.500z" fill="#8484b8" stroke="#33335e"></path>
              <path d="M6 8.500h11M7 10v6M9 10v6M11 10v6" stroke="#b9b9e0"></path></svg></button>
            <button aria-label="Back"><svg width="10" height="10"><path d="M9 0v10L1 5z" fill="#111"></path></svg></button>
            <button aria-label="Forward"><svg width="10" height="10"><path d="M1 0v10L9 5z" fill="#b4b4b4"></path></svg></button>
            <button aria-label="Refresh"><svg width="22" height="22" viewBox="0 0 22 22">
              <path d="M1.500 13.500C0.500 7 5 3.500 10.500 3.500V0.500l5.500 5.500-5.500 5V8C7.500 8 5.500 9.500 6 12.500z" fill="#9c9ccc" stroke="#26264f"></path>
              <path d="M20.500 8.500C21.500 15 17 18.500 11.500 18.500v3L6 16l5.500-5v3c3 0 5-1.500 4.500-4.500z" fill="#9c9ccc" stroke="#26264f"></path></svg></button>
            <button aria-label="Region of interest"><svg width="16" height="16">
              <rect x="0.500" y="0.500" width="15" height="15" fill="#ffffff" stroke="#000"></rect>
              <path d="M3.500 0v16M12.500 0v16" stroke="#000"></path>
              <rect x="4" y="1" width="8" height="4" fill="#ff0000"></rect>
              <path d="M4 6h3v2H4zM9 8h3v3H9zM5 11h3v2H5z" fill="#c4ccff"></path>
              <path d="M8 6h3v1H8zM5 9h3v1H5zM9 12h3v2H9z" fill="#ffc8d0"></path></svg></button>
            <button aria-label="Fit to window"><svg width="14" height="14" fill="none" stroke="#000">
              <rect x="4.500" y="4.500" width="5" height="5"></rect>
              <path d="M0.500 0.500L4 4M13.500 0.500L10 4M0.500 13.500L4 10M13.500 13.500L10 10M1 3.500h2.500V1M13 3.500h-2.500V1M1 10.500h2.500V13M13 10.500h-2.500V13"></path></svg></button>
            <button aria-label="Popup behaviour"><svg width="20" height="16">
              <path d="M1 1.500h17.500v9H9L4.500 15v-4.500H1z" fill="#ece7a6" stroke="#777" stroke-width="1.500"></path></svg></button>
          </div>
          <span class="bar"></span>
          <div class="zoom">
            <button aria-label="Zoom out"><svg width="9" height="9"><path d="M0 4.500h9" stroke="#000"></path></svg></button>
            <input type="range" min="0" max="21" value="16" aria-label="Zoom level" />
            <button aria-label="Zoom in"><svg width="9" height="9"><path d="M0 4.500h9M4.500 0v9" stroke="#000"></path></svg></button>
          </div>
        </div>
        <div class="rule"></div>
        <section class="panel header">
          <div class="names"></div>
          <track-view class="view" kind="ruler" top="69" span="126"></track-view>
          <scroll-bar></scroll-bar>
        </section>
        <section class="panel vcf">
          <div class="names mid"><div class="name">BIALLELIC~ONLY.vcf</div></div>
          <track-view class="view" kind="variants" top="199" span="124"></track-view>
          <scroll-bar></scroll-bar>
        </section>
        <div class="split"></div>
        <section class="panel reads">
          <div class="names">
            <div class="name cover">nanopore.graphmap.sorted.bam<br />erage</div>
            <div class="selected"><div class="name">nanopore.graphmap.sorted.bam</div></div>
          </div>
          <track-view class="view" kind="reads" top="330" span="954"></track-view>
          <scroll-bar thumb="97"></scroll-bar>
        </section>
        <div class="split"></div>
        <section class="panel features">
          <div class="names feat">
            <div class="name strand">Sequence<svg width="16" height="10"><path d="M0 3h9V0l7 5-7 5V7H0z" fill="#000"></path></svg></div>
            <div class="name">GCF_00371322...nomic.gff.gz</div>
          </div>
          <track-view class="view" kind="sequence" top="1289" span="81"></track-view>
          <scroll-bar thumb="84"></scroll-bar>
        </section>
        <footer class="status">
          <div class="cell loaded">4 tracks loaded</div>
          <div class="cell lamp"><i></i></div>
          <div class="cell place">NC_039898.1:1,393,815</div>
          <div class="cell note"></div>
          <div class="cell memory">2,526M of 4,13...</div>
        </footer>
      </div></div>
      <div class="tip" role="tooltip">nanopore.graphmap.sorted.bam<br />/home/michael/FAST5/CoffeeMinIon/20220414_1039_MN19654_AJF976_ed35bf91/map_to_ref/nanopore.graphmap.sorted.bam</div>
    `;
  }
}
